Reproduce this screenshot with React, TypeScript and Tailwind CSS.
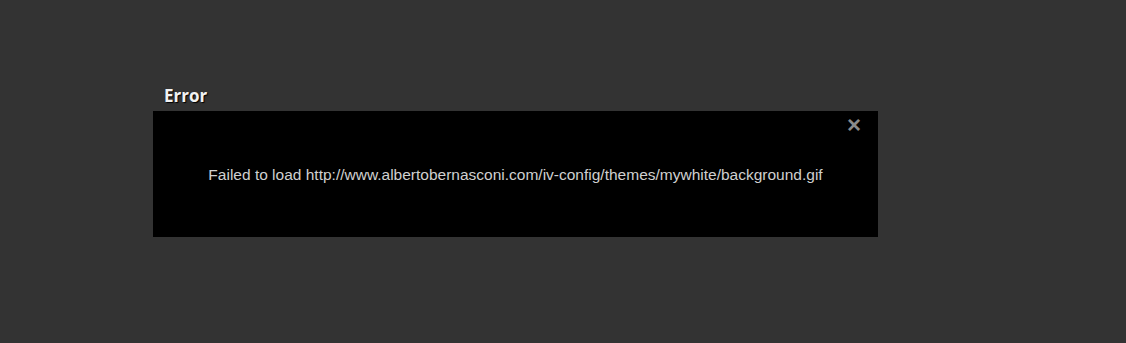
import React from "react";

const App = () => {
  return (
    <div className="w-[1126px] h-[343px] bg-[#333333] overflow-hidden">
      <div className="pt-[84px] pl-[153px] w-[878px]">
        <div className="w-[725px]">
          <h2 className="pl-[11px] h-[27px] text-[17px] leading-[24px] font-bold text-[#f2f2f2] font-['Open_Sans',sans-serif] [text-shadow:1px_1px_1px_#000]">
            Error
          </h2>
          <div className="relative bg-black h-[126px] flex items-center justify-center">
            <button className="absolute top-[0px] right-[17px] text-[#8a8a8a] text-[24px] leading-[28px] font-bold font-['Liberation_Sans',sans-serif]">
              ×
            </button>
            <p className="text-[15.5px] text-[#d0d0d0] font-['Liberation_Sans',Arial,sans-serif] mt-[1px]">
              Failed to load http://www.albertobernasconi.com/iv-config/themes/mywhite/background.gif
            </p>
          </div>
        </div>
      </div>
    </div>
  );
};

export default App;
